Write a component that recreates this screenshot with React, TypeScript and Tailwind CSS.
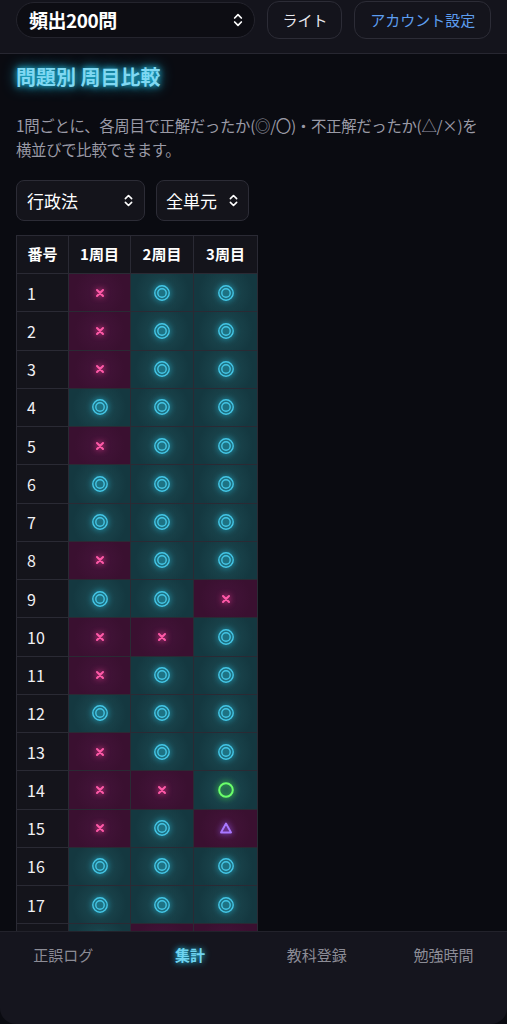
import { ChevronsUpDown } from 'lucide-react';

type Mark = 'x' | 'dc' | 'c' | 't';

const rows: Mark[][] = [
  ['x', 'dc', 'dc'],
  ['x', 'dc', 'dc'],
  ['x', 'dc', 'dc'],
  ['dc', 'dc', 'dc'],
  ['x', 'dc', 'dc'],
  ['dc', 'dc', 'dc'],
  ['dc', 'dc', 'dc'],
  ['x', 'dc', 'dc'],
  ['dc', 'dc', 'x'],
  ['x', 'x', 'dc'],
  ['x', 'dc', 'dc'],
  ['dc', 'dc', 'dc'],
  ['x', 'dc', 'dc'],
  ['x', 'x', 'c'],
  ['x', 'dc', 't'],
  ['dc', 'dc', 'dc'],
  ['dc', 'dc', 'dc'],
  ['dc', 'x', 'x'],
];

function Symbol({ mark }: { mark: Mark }) {
  if (mark === 'x') {
    return (
      <svg width="12" height="12" viewBox="0 0 12 12" className="[filter:drop-shadow(0_0_3px_#ff3d9a)]">
        <path d="M3 3 L9 9 M9 3 L3 9" stroke="#ff5aa8" strokeWidth="2" strokeLinecap="round" />
      </svg>
    );
  }
  if (mark === 'dc') {
    return (
      <svg width="18" height="18" viewBox="0 0 18 18" className="[filter:drop-shadow(0_0_3px_#22c3e6)]">
        <circle cx="9" cy="9" r="7.2" fill="none" stroke="#45c6e6" strokeWidth="1.4" />
        <circle cx="9" cy="9" r="4.2" fill="none" stroke="#45c6e6" strokeWidth="1.4" />
      </svg>
    );
  }
  if (mark === 'c') {
    return (
      <svg width="18" height="18" viewBox="0 0 18 18" className="[filter:drop-shadow(0_0_3px_#4dff4d)]">
        <circle cx="9" cy="9" r="6.8" fill="none" stroke="#6bff6b" strokeWidth="2" />
      </svg>
    );
  }
  return (
    <svg width="14" height="14" viewBox="0 0 14 14" className="[filter:drop-shadow(0_0_3px_#9b5cff)]">
      <path d="M7 2.5 L12 11.5 L2 11.5 Z" fill="none" stroke="#a878ff" strokeWidth="1.9" strokeLinejoin="round" />
    </svg>
  );
}

function MarkCell({ mark }: { mark: Mark }) {
  const bad = mark === 'x' || mark === 't';
  return (
    <div
      className={`h-[37.25px] flex items-center justify-center ${
        bad
          ? 'bg-[radial-gradient(circle,#44143a_0%,#3a1030_70%)]'
          : 'bg-[radial-gradient(circle,#1d4b53_0%,#143840_75%)]'
      }`}
    >
      <Symbol mark={mark} />
    </div>
  );
}

export default function App() {
  return (
    <div
      className="h-screen flex flex-col overflow-hidden bg-[#0a0b11] text-white"
      style={{ fontFamily: '"Noto Sans CJK JP", "Noto Sans", sans-serif' }}
    >
      {/* header */}
      <div className="shrink-0 flex items-start gap-3 px-4 pt-[1px] pb-[14px] bg-[#14141c] border-b border-[#272731]">
        <div className="mt-[1px] w-[240px] h-[36px] flex items-center justify-between pl-3 pr-2 rounded-full bg-[#0d0d13] border border-[#24242d]">
          <span className="text-[19px] font-semibold tracking-tight">頻出200問</span>
          <ChevronsUpDown size={16} strokeWidth={2.6} className="text-white" />
        </div>
        <button className="w-[75px] h-[38px] rounded-xl border border-[#2c2c36] text-[15px] text-[#e8e8ee]">ライト</button>
        <button className="w-[137px] h-[38px] rounded-xl border border-[#2c2c36] text-[15px] text-[#5d9ef0]">アカウント設定</button>
      </div>

      <div className="flex-1 min-h-0 overflow-hidden px-4">
        <h1 className="mt-[9px] text-[20px] leading-[28px] font-bold text-[#7fd8f2] [text-shadow:0_0_6px_#22c9ee,0_0_14px_#1aa7cc]">
          問題別 周目比較
        </h1>
        <p className="mt-[22px] text-[15.4px] leading-[24px] text-[#9a9aa6] tracking-[-0.3px] whitespace-nowrap">
          1問ごとに、各周目で正解だったか(◎/〇)・不正解だったか(△/×)を
          <br />
          横並びで比較できます。
        </p>

        <div className="mt-[19px] flex gap-[11px]">
          <div className="w-[129px] h-[41px] flex items-center justify-between pl-[10px] pr-[8px] rounded-lg bg-[#14141b] border border-[#2c2c36]">
            <span className="text-[17px]">行政法</span>
            <ChevronsUpDown size={15} strokeWidth={2.6} />
          </div>
          <div className="w-[93px] h-[41px] flex items-center justify-between pl-[9px] pr-[7px] rounded-lg bg-[#14141b] border border-[#2c2c36]">
            <span className="text-[17px]">全単元</span>
            <ChevronsUpDown size={15} strokeWidth={2.6} />
          </div>
        </div>

        <div className="mt-[14px] w-fit grid grid-cols-[51px_61px_62px_63px] gap-px bg-[#2a2a34] border border-[#2a2a34]">
          {['番号', '1周目', '2周目', '3周目'].map((h) => (
            <div key={h} className="h-[37px] flex items-center justify-center bg-[#14141b] text-[15px] font-bold">
              {h}
            </div>
          ))}
          {rows.map((r, i) => (
            <div key={i} className="contents">
              <div className="h-[37.25px] flex items-center pl-[10px] bg-[#14141b] text-[16px] text-[#f0f0f4]">{i + 1}</div>
              {r.map((m, j) => (
                <MarkCell key={j} mark={m} />
              ))}
            </div>
          ))}
        </div>
      </div>

      {/* bottom nav */}
      <div className="shrink-0 h-[93px] bg-[#15151e] border-t border-[#22222b] rounded-b-2xl grid grid-cols-4 pt-[12px]">
        <div className="text-center text-[15px] text-[#8c8c96]">正誤ログ</div>
        <div className="text-center text-[15px] font-bold text-[#6fd3f0] [text-shadow:0_0_6px_#22c9ee]">集計</div>
        <div className="text-center text-[15px] text-[#8c8c96]">教科登録</div>
        <div className="text-center text-[15px] text-[#8c8c96]">勉強時間</div>
      </div>
    </div>
  );
}
